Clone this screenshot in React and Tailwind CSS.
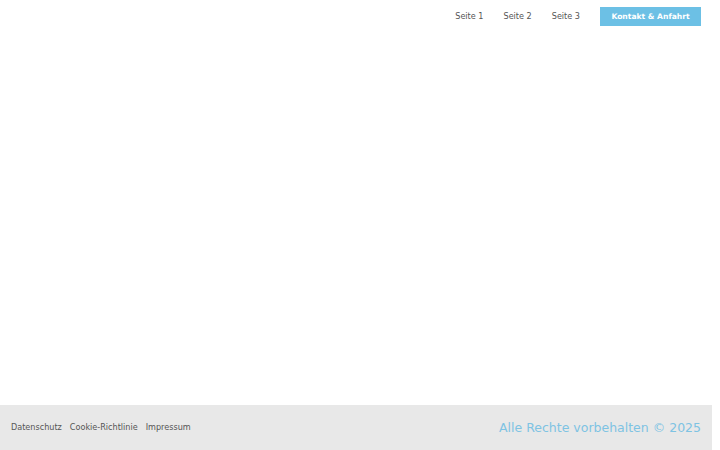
export default function App() {
  return (
    <div className="flex h-[450px] w-[720px] flex-col bg-white" style={{ fontFamily: '"DejaVu Sans", sans-serif' }}>
      <header className="flex h-[33px] items-center justify-end pr-[19px]">
        <nav className="flex items-center gap-[20px] text-[8.1px] text-[#555]">
          <a>Seite 1</a>
          <a>Seite 2</a>
          <a>Seite 3</a>
          <a className="flex h-[19px] w-[101px] items-center justify-center bg-[#6cc0e5] text-[7.6px] font-bold text-white">Kontakt &amp; Anfahrt</a>
        </nav>
      </header>
      <main className="flex-1" />
      <footer className="flex h-[45px] w-[712px] items-center justify-between bg-[#e8e8e8] pl-[11px] pr-[11px]">
        <div className="flex gap-[8px] text-[8.1px] text-[#555]">
          <a>Datenschutz</a>
          <a>Cookie-Richtlinie</a>
          <a>Impressum</a>
        </div>
        <div className="pt-px text-[12.5px] text-[#7ec3e3]">Alle Rechte vorbehalten © 2025</div>
      </footer>
    </div>
  );
}
